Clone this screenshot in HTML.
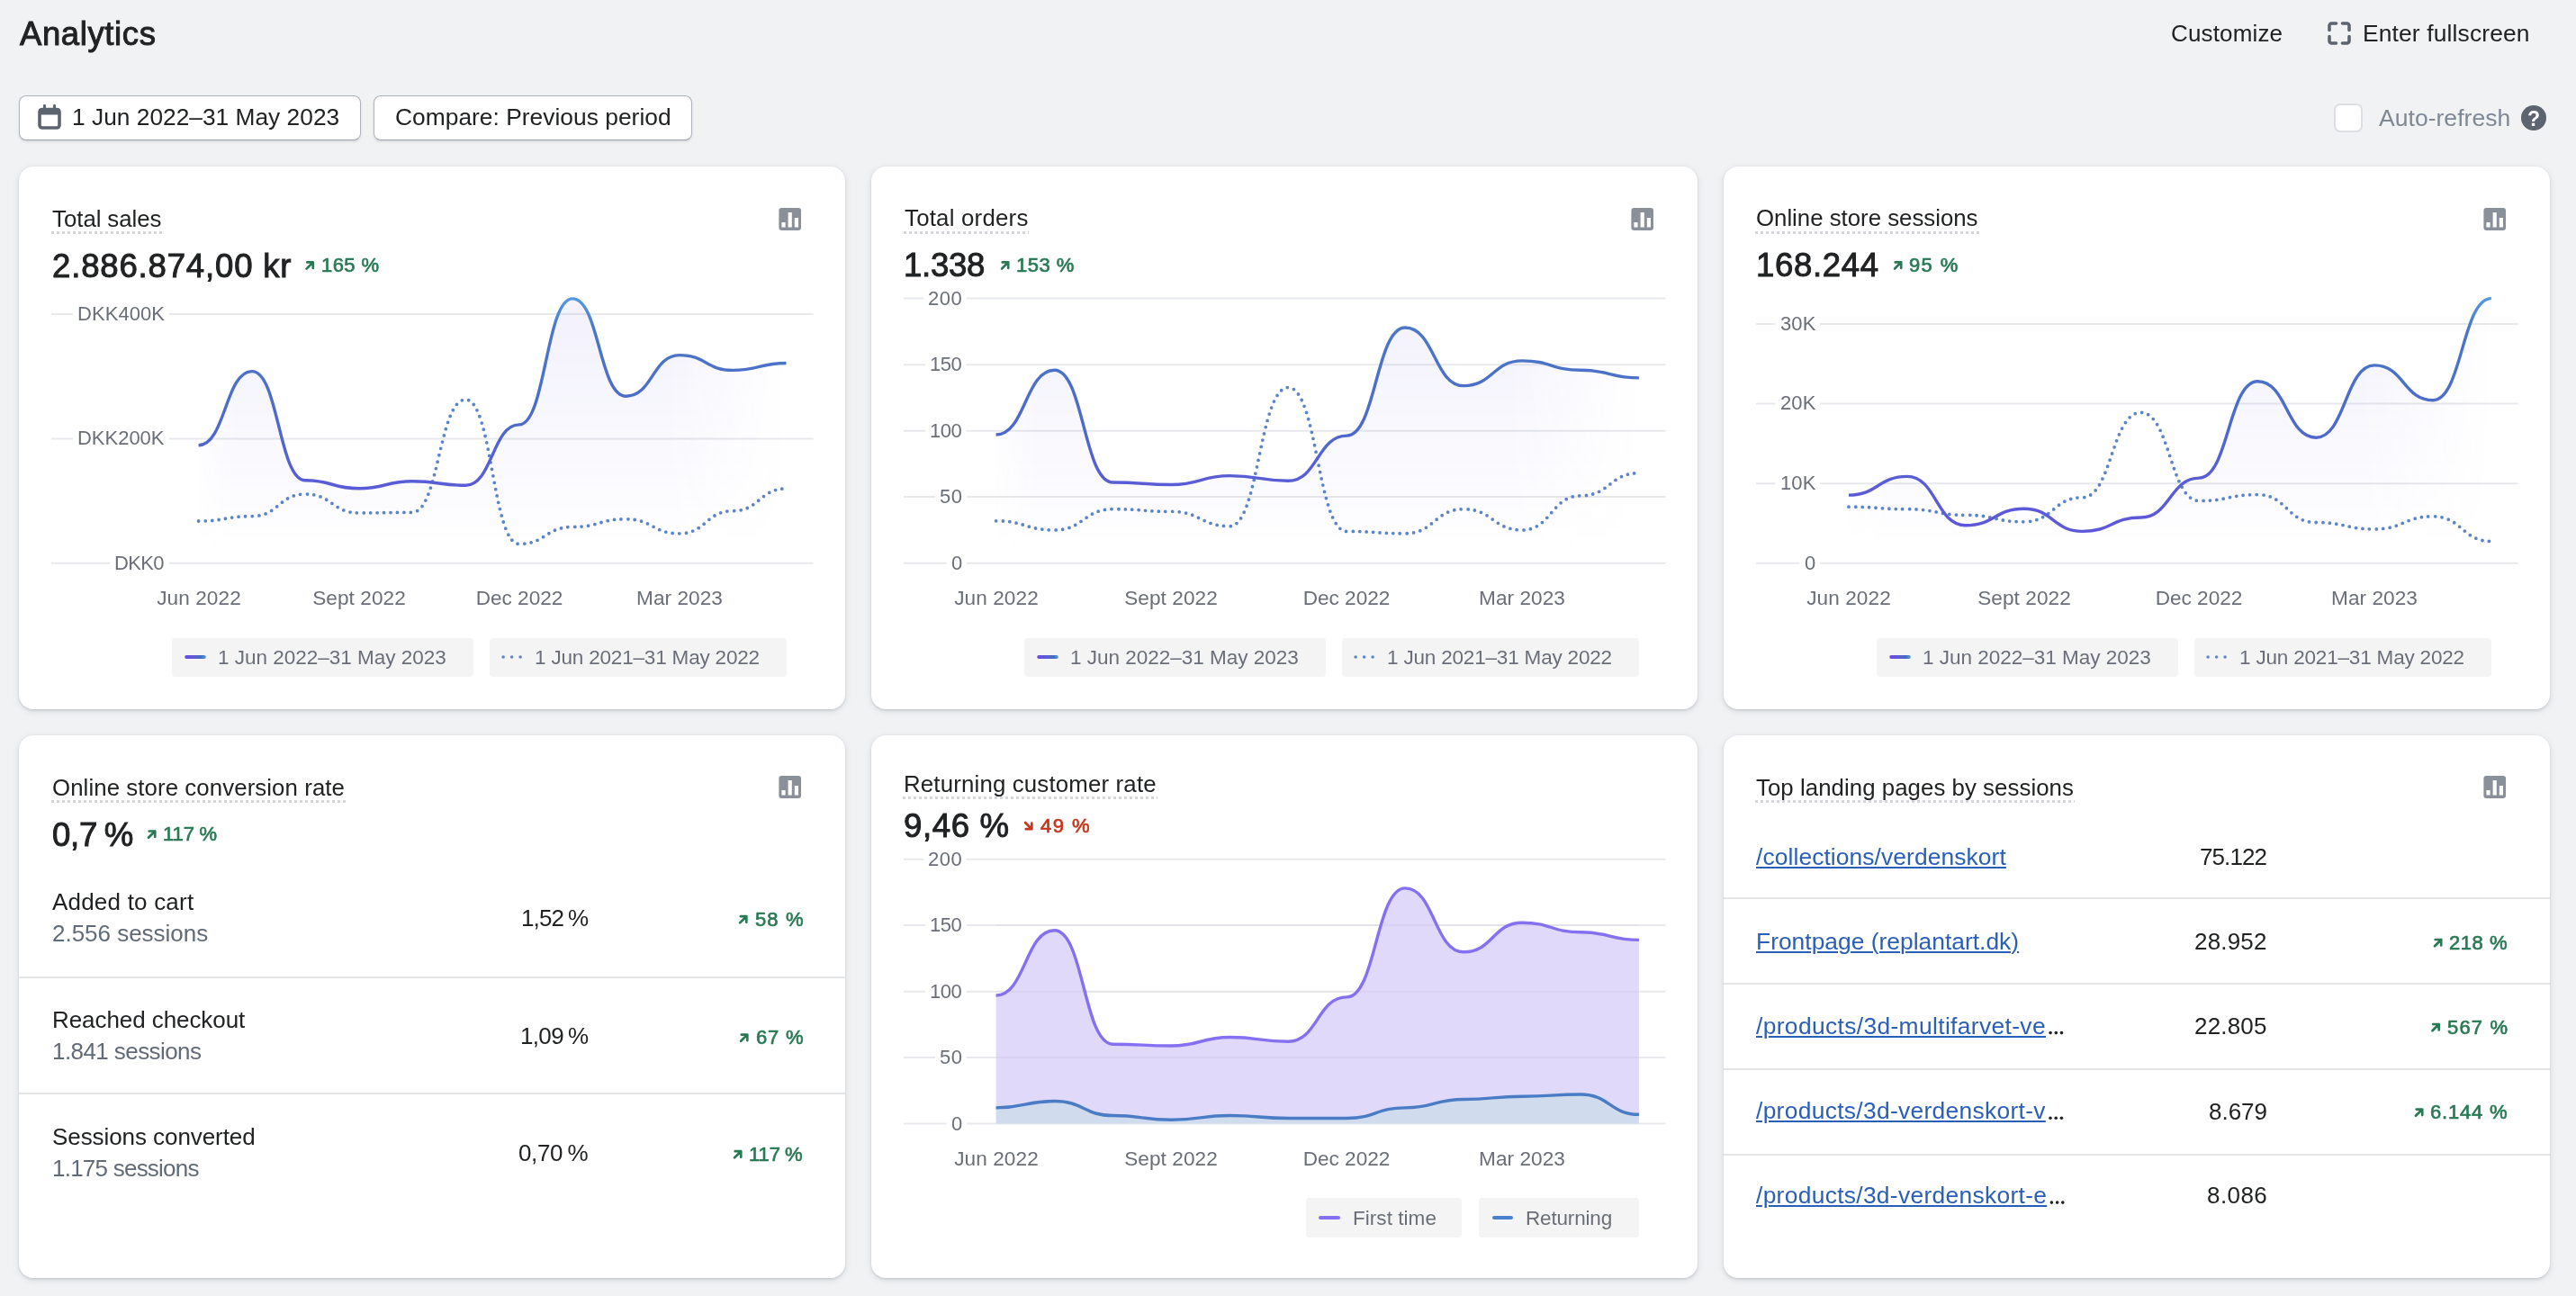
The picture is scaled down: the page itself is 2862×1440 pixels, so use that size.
<!DOCTYPE html>
<html><head><meta charset="utf-8">
<style>
html,body{margin:0;padding:0;}
body{width:2862px;height:1440px;background:#f1f2f4;position:relative;overflow:hidden;font-family:"Liberation Sans", sans-serif;}
.t{position:absolute;white-space:nowrap;line-height:1;z-index:3;will-change:transform;}
.b{position:absolute;z-index:1;}
svg.main{position:absolute;left:0;top:0;z-index:2;}
</style></head><body>
<div class="b" style="left:21px;top:106px;width:380.00px;height:50.00px;background:#fff;border:1.5px solid #aeb3bb;border-bottom-color:#9ca2ab;border-radius:8px;box-sizing:border-box;box-shadow:0 2px 3px rgba(30,30,40,0.10);"></div><div class="b" style="left:415px;top:106px;width:354.00px;height:50.00px;background:#fff;border:1.5px solid #aeb3bb;border-bottom-color:#9ca2ab;border-radius:8px;box-sizing:border-box;box-shadow:0 2px 3px rgba(30,30,40,0.10);"></div><div class="b" style="left:2593px;top:115px;width:32.00px;height:32.00px;background:#fff;border:2.6px solid #dddfe3;border-radius:7px;box-sizing:border-box;"></div><div class="b" style="left:21px;top:185px;width:918.00px;height:603.00px;background:#fff;border-radius:16px;box-shadow:0 0 0 0.5px rgba(60,60,70,0.04),0 2px 3px rgba(30,30,40,0.11),0 2px 10px rgba(30,30,40,0.09);"></div><div class="b" style="left:968px;top:185px;width:918.00px;height:603.00px;background:#fff;border-radius:16px;box-shadow:0 0 0 0.5px rgba(60,60,70,0.04),0 2px 3px rgba(30,30,40,0.11),0 2px 10px rgba(30,30,40,0.09);"></div><div class="b" style="left:1915px;top:185px;width:918.00px;height:603.00px;background:#fff;border-radius:16px;box-shadow:0 0 0 0.5px rgba(60,60,70,0.04),0 2px 3px rgba(30,30,40,0.11),0 2px 10px rgba(30,30,40,0.09);"></div><div class="b" style="left:21px;top:817px;width:918.00px;height:603.00px;background:#fff;border-radius:16px;box-shadow:0 0 0 0.5px rgba(60,60,70,0.04),0 2px 3px rgba(30,30,40,0.11),0 2px 10px rgba(30,30,40,0.09);"></div><div class="b" style="left:968px;top:817px;width:918.00px;height:603.00px;background:#fff;border-radius:16px;box-shadow:0 0 0 0.5px rgba(60,60,70,0.04),0 2px 3px rgba(30,30,40,0.11),0 2px 10px rgba(30,30,40,0.09);"></div><div class="b" style="left:1915px;top:817px;width:918.00px;height:603.00px;background:#fff;border-radius:16px;box-shadow:0 0 0 0.5px rgba(60,60,70,0.04),0 2px 3px rgba(30,30,40,0.11),0 2px 10px rgba(30,30,40,0.09);"></div><div class="b" style="left:56.8px;top:256.8px;width:123.50px;height:3.00px;background-image:linear-gradient(to right,#d4d6da 50%,transparent 50%);background-size:6px 3px;"></div><div class="b" style="left:191.2px;top:709.3px;width:334.50px;height:42.50px;background:#f4f4f5;border-radius:4px;"></div><div class="b" style="left:543.9px;top:709.3px;width:329.80px;height:42.50px;background:#f4f4f5;border-radius:4px;"></div><div class="b" style="left:1003.6px;top:256.8px;width:139.30px;height:3.00px;background-image:linear-gradient(to right,#d4d6da 50%,transparent 50%);background-size:6px 3px;"></div><div class="b" style="left:1138.2px;top:709.3px;width:334.50px;height:42.50px;background:#f4f4f5;border-radius:4px;"></div><div class="b" style="left:1490.9px;top:709.3px;width:329.80px;height:42.50px;background:#f4f4f5;border-radius:4px;"></div><div class="b" style="left:1950.4px;top:256.8px;width:248.50px;height:3.00px;background-image:linear-gradient(to right,#d4d6da 50%,transparent 50%);background-size:6px 3px;"></div><div class="b" style="left:2085.2px;top:709.3px;width:334.50px;height:42.50px;background:#f4f4f5;border-radius:4px;"></div><div class="b" style="left:2437.9px;top:709.3px;width:329.80px;height:42.50px;background:#f4f4f5;border-radius:4px;"></div><div class="b" style="left:56.5px;top:888.9px;width:327.00px;height:3.00px;background-image:linear-gradient(to right,#d4d6da 50%,transparent 50%);background-size:6px 3px;"></div><div class="b" style="left:21px;top:1084.5px;width:918.00px;height:2.00px;background:#e4e5e7;"></div><div class="b" style="left:21px;top:1214px;width:918.00px;height:2.00px;background:#e4e5e7;"></div><div class="b" style="left:1003.4px;top:884.5px;width:282.60px;height:3.00px;background-image:linear-gradient(to right,#d4d6da 50%,transparent 50%);background-size:6px 3px;"></div><div class="b" style="left:1451px;top:1331px;width:173.40px;height:43.60px;background:#f4f4f5;border-radius:4px;"></div><div class="b" style="left:1643px;top:1331px;width:178.00px;height:43.60px;background:#f4f4f5;border-radius:4px;"></div><div class="b" style="left:1950.4px;top:888.9px;width:354.90px;height:3.00px;background-image:linear-gradient(to right,#d4d6da 50%,transparent 50%);background-size:6px 3px;"></div><div class="b" style="left:1915px;top:996.9px;width:918.00px;height:2.00px;background:#e4e5e7;"></div><div class="b" style="left:1915px;top:1092.4px;width:918.00px;height:2.00px;background:#e4e5e7;"></div><div class="b" style="left:1915px;top:1187.2px;width:918.00px;height:2.00px;background:#e4e5e7;"></div><div class="b" style="left:1915px;top:1281.9px;width:918.00px;height:2.00px;background:#e4e5e7;"></div>
<svg class="main" width="2862" height="1440" viewBox="0 0 2862 1440"><defs>
<linearGradient id="lg" gradientUnits="userSpaceOnUse" x1="0" y1="325" x2="0" y2="600">
 <stop offset="0" stop-color="#58a0e6"/><stop offset="0.145" stop-color="#4a78c5"/><stop offset="0.527" stop-color="#4c6acb"/><stop offset="0.78" stop-color="#5a5cd6"/><stop offset="1" stop-color="#5e56da"/>
</linearGradient>
<linearGradient id="af" gradientUnits="userSpaceOnUse" x1="0" y1="330" x2="0" y2="615">
 <stop offset="0" stop-color="#6a5ee0" stop-opacity="0.085"/><stop offset="0.7" stop-color="#6a5ee0" stop-opacity="0.03"/><stop offset="1" stop-color="#6a5ee0" stop-opacity="0"/>
</linearGradient>
<linearGradient id="hm" x1="0" y1="0" x2="1" y2="0">
 <stop offset="0" stop-color="#fff" stop-opacity="0.2"/><stop offset="0.06" stop-color="#fff" stop-opacity="1"/><stop offset="0.8" stop-color="#fff" stop-opacity="1"/><stop offset="1" stop-color="#fff" stop-opacity="0"/>
</linearGradient>
<mask id="am" maskContentUnits="objectBoundingBox"><rect x="0" y="0" width="1" height="1" fill="url(#hm)"/></mask>
<linearGradient id="leg" x1="0" y1="0" x2="1" y2="0">
 <stop offset="0" stop-color="#6c48e8"/><stop offset="0.5" stop-color="#5a60d0"/><stop offset="0.78" stop-color="#3f6fc1"/><stop offset="1" stop-color="#5a9de2"/>
</linearGradient>
</defs>
<path d="M2588,33.5 V28.5 a2.5,2.5 0 0 1 2.5,-2.5 H2595.5 M2602.5,26 H2607.5 a2.5,2.5 0 0 1 2.5,2.5 V33.5 M2610,40.5 V45.5 a2.5,2.5 0 0 1 -2.5,2.5 H2602.5 M2595.5,48 H2590.5 a2.5,2.5 0 0 1 -2.5,-2.5 V40.5" fill="none" stroke="#5c6470" stroke-width="3.6" stroke-linecap="round" stroke-linejoin="round"/><rect x="44" y="121.5" width="22" height="20.5" rx="3" fill="none" stroke="#5c6470" stroke-width="3.6"/><rect x="43" y="120.5" width="24" height="7" rx="2" fill="#5c6470"/><rect x="48" y="116" width="3" height="6" rx="1.2" fill="#5c6470"/><rect x="59" y="116" width="3" height="6" rx="1.2" fill="#5c6470"/><circle cx="2815" cy="131" r="14" fill="#5c6470"/><rect x="865.4" y="231" width="24.6" height="25" rx="3" fill="#8a9099"/><rect x="868.4" y="247" width="4.2" height="5.5" fill="#fff"/><rect x="875.6" y="236" width="4.2" height="16.5" fill="#fff"/><rect x="882.8" y="242" width="4.2" height="10.5" fill="#fff"/><path d="M340.6,298.59999999999997 L347.8,291.4 M341.3,291.4 H347.8 V297.9" fill="none" stroke="#287a54" stroke-width="2.7" stroke-linecap="round" stroke-linejoin="round"/><line x1="57" y1="349" x2="903.5" y2="349" stroke="#e8e9ec" stroke-width="2"/><rect x="80.80000000000001" y="341" width="107" height="16" fill="#fff"/><line x1="57" y1="487.4" x2="903.5" y2="487.4" stroke="#e8e9ec" stroke-width="2"/><rect x="81.30000000000001" y="479.4" width="106.5" height="16" fill="#fff"/><line x1="57" y1="625.7" x2="903.5" y2="625.7" stroke="#e8e9ec" stroke-width="2"/><rect x="122.20000000000002" y="617.7" width="65.6" height="16" fill="#fff"/><path d="M220.60,494.80C250.27,494.80 250.27,412.60 279.95,412.60C309.62,412.60 309.62,533.80 339.30,533.80C368.98,533.80 368.98,542.70 398.65,542.70C428.32,542.70 428.32,534.80 458.00,534.80C487.68,534.80 487.68,539.30 517.35,539.30C547.03,539.30 547.03,471.90 576.70,471.90C606.38,471.90 606.38,331.90 636.05,331.90C665.72,331.90 665.72,440.20 695.40,440.20C725.08,440.20 725.08,394.60 754.75,394.60C784.42,394.60 784.42,411.40 814.10,411.40C843.78,411.40 843.78,403.50 873.45,403.50L873.45,625.7L220.60,625.7Z" fill="url(#af)" mask="url(#am)"/><path d="M220.60,579.00C250.27,579.00 250.27,573.60 279.95,573.60C309.62,573.60 309.62,549.00 339.30,549.00C368.98,549.00 368.98,569.90 398.65,569.90C428.32,569.90 428.32,569.40 458.00,569.40C487.68,569.40 487.68,444.00 517.35,444.00C547.03,444.00 547.03,604.40 576.70,604.40C606.38,604.40 606.38,585.50 636.05,585.50C665.72,585.50 665.72,576.80 695.40,576.80C725.08,576.80 725.08,592.80 754.75,592.80C784.42,592.80 784.42,567.70 814.10,567.70C843.78,567.70 843.78,543.00 873.45,543.00" fill="none" stroke="#5b84c8" stroke-width="3.8" stroke-linecap="round" stroke-dasharray="0 7.5"/><path d="M220.60,494.80C250.27,494.80 250.27,412.60 279.95,412.60C309.62,412.60 309.62,533.80 339.30,533.80C368.98,533.80 368.98,542.70 398.65,542.70C428.32,542.70 428.32,534.80 458.00,534.80C487.68,534.80 487.68,539.30 517.35,539.30C547.03,539.30 547.03,471.90 576.70,471.90C606.38,471.90 606.38,331.90 636.05,331.90C665.72,331.90 665.72,440.20 695.40,440.20C725.08,440.20 725.08,394.60 754.75,394.60C784.42,394.60 784.42,411.40 814.10,411.40C843.78,411.40 843.78,403.50 873.45,403.50" fill="none" stroke="url(#lg)" stroke-width="3.4"/><rect x="205.2" y="728" width="23.7" height="4" rx="2" fill="url(#leg)"/><circle cx="559.1" cy="730" r="1.8" fill="#5b87c9"/><circle cx="568.6" cy="730" r="1.8" fill="#5b87c9"/><circle cx="578.1" cy="730" r="1.8" fill="#5b87c9"/><rect x="1812.4" y="231" width="24.6" height="25" rx="3" fill="#8a9099"/><rect x="1815.4" y="247" width="4.2" height="5.5" fill="#fff"/><rect x="1822.6000000000001" y="236" width="4.2" height="16.5" fill="#fff"/><rect x="1829.8000000000002" y="242" width="4.2" height="10.5" fill="#fff"/><path d="M1113.0,298.59999999999997 L1120.2,291.4 M1113.7,291.4 H1120.2 V297.9" fill="none" stroke="#287a54" stroke-width="2.7" stroke-linecap="round" stroke-linejoin="round"/><line x1="1004" y1="331.6" x2="1850.5" y2="331.6" stroke="#e8e9ec" stroke-width="2"/><rect x="1026.2" y="323.6" width="47.8" height="16" fill="#fff"/><line x1="1004" y1="405.2" x2="1850.5" y2="405.2" stroke="#e8e9ec" stroke-width="2"/><rect x="1028.3" y="397.2" width="45.7" height="16" fill="#fff"/><line x1="1004" y1="478.8" x2="1850.5" y2="478.8" stroke="#e8e9ec" stroke-width="2"/><rect x="1028.3" y="470.8" width="45.7" height="16" fill="#fff"/><line x1="1004" y1="552" x2="1850.5" y2="552" stroke="#e8e9ec" stroke-width="2"/><rect x="1039" y="544" width="35" height="16" fill="#fff"/><line x1="1004" y1="625.7" x2="1850.5" y2="625.7" stroke="#e8e9ec" stroke-width="2"/><rect x="1051.5" y="617.7" width="22.5" height="16" fill="#fff"/><path d="M1106.60,483.06C1139.07,483.06 1139.07,411.30 1171.54,411.30C1204.01,411.30 1204.01,536.00 1236.48,536.00C1268.95,536.00 1268.95,538.50 1301.42,538.50C1333.89,538.50 1333.89,528.65 1366.36,528.65C1398.83,528.65 1398.83,534.23 1431.30,534.23C1463.77,534.23 1463.77,484.09 1496.24,484.09C1528.71,484.09 1528.71,363.95 1561.18,363.95C1593.65,363.95 1593.65,428.65 1626.12,428.65C1658.59,428.65 1658.59,400.86 1691.06,400.86C1723.53,400.86 1723.53,411.30 1756.00,411.30C1788.47,411.30 1788.47,419.83 1820.94,419.83L1820.94,625.7L1106.60,625.7Z" fill="url(#af)" mask="url(#am)"/><path d="M1106.60,578.79C1139.07,578.79 1139.07,588.94 1171.54,588.94C1204.01,588.94 1204.01,565.70 1236.48,565.70C1268.95,565.70 1268.95,568.35 1301.42,568.35C1333.89,568.35 1333.89,584.67 1366.36,584.67C1398.83,584.67 1398.83,430.56 1431.30,430.56C1463.77,430.56 1463.77,590.41 1496.24,590.41C1528.71,590.41 1528.71,592.76 1561.18,592.76C1593.65,592.76 1593.65,565.70 1626.12,565.70C1658.59,565.70 1658.59,588.94 1691.06,588.94C1723.53,588.94 1723.53,550.85 1756.00,550.85C1788.47,550.85 1788.47,525.71 1820.94,525.71" fill="none" stroke="#5b84c8" stroke-width="3.8" stroke-linecap="round" stroke-dasharray="0 7.5"/><path d="M1106.60,483.06C1139.07,483.06 1139.07,411.30 1171.54,411.30C1204.01,411.30 1204.01,536.00 1236.48,536.00C1268.95,536.00 1268.95,538.50 1301.42,538.50C1333.89,538.50 1333.89,528.65 1366.36,528.65C1398.83,528.65 1398.83,534.23 1431.30,534.23C1463.77,534.23 1463.77,484.09 1496.24,484.09C1528.71,484.09 1528.71,363.95 1561.18,363.95C1593.65,363.95 1593.65,428.65 1626.12,428.65C1658.59,428.65 1658.59,400.86 1691.06,400.86C1723.53,400.86 1723.53,411.30 1756.00,411.30C1788.47,411.30 1788.47,419.83 1820.94,419.83" fill="none" stroke="url(#lg)" stroke-width="3.4"/><rect x="1152.2" y="728" width="23.7" height="4" rx="2" fill="url(#leg)"/><circle cx="1506.1" cy="730" r="1.8" fill="#5b87c9"/><circle cx="1515.6" cy="730" r="1.8" fill="#5b87c9"/><circle cx="1525.1" cy="730" r="1.8" fill="#5b87c9"/><rect x="2759.4" y="231" width="24.6" height="25" rx="3" fill="#8a9099"/><rect x="2762.4" y="247" width="4.2" height="5.5" fill="#fff"/><rect x="2769.6" y="236" width="4.2" height="16.5" fill="#fff"/><rect x="2776.8" y="242" width="4.2" height="10.5" fill="#fff"/><path d="M2105.0,298.59999999999997 L2112.2,291.4 M2105.7,291.4 H2112.2 V297.9" fill="none" stroke="#287a54" stroke-width="2.7" stroke-linecap="round" stroke-linejoin="round"/><line x1="1951" y1="360" x2="2797.5" y2="360" stroke="#e8e9ec" stroke-width="2"/><rect x="1972.5" y="352" width="49.3" height="16" fill="#fff"/><line x1="1951" y1="448.4" x2="2797.5" y2="448.4" stroke="#e8e9ec" stroke-width="2"/><rect x="1972.5" y="440.4" width="49.3" height="16" fill="#fff"/><line x1="1951" y1="537.3" x2="2797.5" y2="537.3" stroke="#e8e9ec" stroke-width="2"/><rect x="1972.5" y="529.3" width="49.3" height="16" fill="#fff"/><line x1="1951" y1="625.7" x2="2797.5" y2="625.7" stroke="#e8e9ec" stroke-width="2"/><rect x="1999.3" y="617.7" width="22.5" height="16" fill="#fff"/><path d="M2054.00,550.10C2086.45,550.10 2086.45,529.40 2118.90,529.40C2151.35,529.40 2151.35,583.70 2183.80,583.70C2216.25,583.70 2216.25,565.20 2248.70,565.20C2281.15,565.20 2281.15,590.40 2313.60,590.40C2346.05,590.40 2346.05,575.00 2378.50,575.00C2410.95,575.00 2410.95,531.10 2443.40,531.10C2475.85,531.10 2475.85,423.70 2508.30,423.70C2540.75,423.70 2540.75,486.20 2573.20,486.20C2605.65,486.20 2605.65,405.90 2638.10,405.90C2670.55,405.90 2670.55,444.70 2703.00,444.70C2735.45,444.70 2735.45,331.60 2767.90,331.60L2767.90,625.7L2054.00,625.7Z" fill="url(#af)" mask="url(#am)"/><path d="M2054.00,563.20C2086.45,563.20 2086.45,565.70 2118.90,565.70C2151.35,565.70 2151.35,572.30 2183.80,572.30C2216.25,572.30 2216.25,579.80 2248.70,579.80C2281.15,579.80 2281.15,552.80 2313.60,552.80C2346.05,552.80 2346.05,458.30 2378.50,458.30C2410.95,458.30 2410.95,556.50 2443.40,556.50C2475.85,556.50 2475.85,549.60 2508.30,549.60C2540.75,549.60 2540.75,580.50 2573.20,580.50C2605.65,580.50 2605.65,587.90 2638.10,587.90C2670.55,587.90 2670.55,573.80 2703.00,573.80C2735.45,573.80 2735.45,601.50 2767.90,601.50" fill="none" stroke="#5b84c8" stroke-width="3.8" stroke-linecap="round" stroke-dasharray="0 7.5"/><path d="M2054.00,550.10C2086.45,550.10 2086.45,529.40 2118.90,529.40C2151.35,529.40 2151.35,583.70 2183.80,583.70C2216.25,583.70 2216.25,565.20 2248.70,565.20C2281.15,565.20 2281.15,590.40 2313.60,590.40C2346.05,590.40 2346.05,575.00 2378.50,575.00C2410.95,575.00 2410.95,531.10 2443.40,531.10C2475.85,531.10 2475.85,423.70 2508.30,423.70C2540.75,423.70 2540.75,486.20 2573.20,486.20C2605.65,486.20 2605.65,405.90 2638.10,405.90C2670.55,405.90 2670.55,444.70 2703.00,444.70C2735.45,444.70 2735.45,331.60 2767.90,331.60" fill="none" stroke="url(#lg)" stroke-width="3.4"/><rect x="2099.2" y="728" width="23.7" height="4" rx="2" fill="url(#leg)"/><circle cx="2453.1" cy="730" r="1.8" fill="#5b87c9"/><circle cx="2462.6" cy="730" r="1.8" fill="#5b87c9"/><circle cx="2472.1" cy="730" r="1.8" fill="#5b87c9"/><rect x="865.4" y="862" width="24.6" height="25" rx="3" fill="#8a9099"/><rect x="868.4" y="878" width="4.2" height="5.5" fill="#fff"/><rect x="875.6" y="867" width="4.2" height="16.5" fill="#fff"/><rect x="882.8" y="873" width="4.2" height="10.5" fill="#fff"/><path d="M165.00000000000003,930.7 L172.20000000000002,923.5 M165.70000000000002,923.5 H172.20000000000002 V930" fill="none" stroke="#287a54" stroke-width="2.7" stroke-linecap="round" stroke-linejoin="round"/><path d="M822.0999999999999,1025.4 L829.3,1018.2 M822.8,1018.2 H829.3 V1024.7" fill="none" stroke="#287a54" stroke-width="2.7" stroke-linecap="round" stroke-linejoin="round"/><path d="M823.0999999999999,1156.8000000000002 L830.3,1149.6000000000001 M823.8,1149.6000000000001 H830.3 V1156.1000000000001" fill="none" stroke="#287a54" stroke-width="2.7" stroke-linecap="round" stroke-linejoin="round"/><path d="M815.9999999999999,1286.4 L823.1999999999999,1279.2 M816.6999999999999,1279.2 H823.1999999999999 V1285.7" fill="none" stroke="#287a54" stroke-width="2.7" stroke-linecap="round" stroke-linejoin="round"/><path d="M1139.1,914.0 L1146.3,921.2 M1146.3,914.7 V921.2 H1139.8" fill="none" stroke="#c7351a" stroke-width="2.7" stroke-linecap="round" stroke-linejoin="round"/><line x1="1004" y1="954.8" x2="1850.5" y2="954.8" stroke="#e8e9ec" stroke-width="2"/><rect x="1026.2" y="946.8" width="47.8" height="16" fill="#fff"/><line x1="1004" y1="1028" x2="1850.5" y2="1028" stroke="#e8e9ec" stroke-width="2"/><rect x="1028.3" y="1020" width="45.7" height="16" fill="#fff"/><line x1="1004" y1="1101.7" x2="1850.5" y2="1101.7" stroke="#e8e9ec" stroke-width="2"/><rect x="1028.3" y="1093.7" width="45.7" height="16" fill="#fff"/><line x1="1004" y1="1175" x2="1850.5" y2="1175" stroke="#e8e9ec" stroke-width="2"/><rect x="1039" y="1167" width="35" height="16" fill="#fff"/><line x1="1004" y1="1248.6" x2="1850.5" y2="1248.6" stroke="#e8e9ec" stroke-width="2"/><rect x="1051.5" y="1240.6" width="22.5" height="16" fill="#fff"/><path d="M1106.60,1106.00C1139.07,1106.00 1139.07,1033.80 1171.54,1033.80C1204.01,1033.80 1204.01,1160.20 1236.48,1160.20C1268.95,1160.20 1268.95,1162.00 1301.42,1162.00C1333.89,1162.00 1333.89,1152.50 1366.36,1152.50C1398.83,1152.50 1398.83,1157.30 1431.30,1157.30C1463.77,1157.30 1463.77,1107.90 1496.24,1107.90C1528.71,1107.90 1528.71,986.90 1561.18,986.90C1593.65,986.90 1593.65,1057.80 1626.12,1057.80C1658.59,1057.80 1658.59,1025.20 1691.06,1025.20C1723.53,1025.20 1723.53,1035.80 1756.00,1035.80C1788.47,1035.80 1788.47,1044.40 1820.94,1044.40L1820.94,1238.30C1788.47,1238.30 1788.47,1216.00 1756.00,1216.00C1723.53,1216.00 1723.53,1218.30 1691.06,1218.30C1658.59,1218.30 1658.59,1221.50 1626.12,1221.50C1593.65,1221.50 1593.65,1230.90 1561.18,1230.90C1528.71,1230.90 1528.71,1242.50 1496.24,1242.50C1463.77,1242.50 1463.77,1242.50 1431.30,1242.50C1398.83,1242.50 1398.83,1239.50 1366.36,1239.50C1333.89,1239.50 1333.89,1244.20 1301.42,1244.20C1268.95,1244.20 1268.95,1239.50 1236.48,1239.50C1204.01,1239.50 1204.01,1223.50 1171.54,1223.50C1139.07,1223.50 1139.07,1230.90 1106.60,1230.90Z" fill="#ddd6fa" fill-opacity="0.92"/><path d="M1106.60,1230.90C1139.07,1230.90 1139.07,1223.50 1171.54,1223.50C1204.01,1223.50 1204.01,1239.50 1236.48,1239.50C1268.95,1239.50 1268.95,1244.20 1301.42,1244.20C1333.89,1244.20 1333.89,1239.50 1366.36,1239.50C1398.83,1239.50 1398.83,1242.50 1431.30,1242.50C1463.77,1242.50 1463.77,1242.50 1496.24,1242.50C1528.71,1242.50 1528.71,1230.90 1561.18,1230.90C1593.65,1230.90 1593.65,1221.50 1626.12,1221.50C1658.59,1221.50 1658.59,1218.30 1691.06,1218.30C1723.53,1218.30 1723.53,1216.00 1756.00,1216.00C1788.47,1216.00 1788.47,1238.30 1820.94,1238.30L1820.94,1248.6L1106.60,1248.6Z" fill="#d0dcee"/><line x1="1106.6" y1="1028" x2="1820.9399999999998" y2="1028" stroke="#000" stroke-opacity="0.025" stroke-width="2"/><line x1="1106.6" y1="1101.7" x2="1820.9399999999998" y2="1101.7" stroke="#000" stroke-opacity="0.025" stroke-width="2"/><line x1="1106.6" y1="1175" x2="1820.9399999999998" y2="1175" stroke="#000" stroke-opacity="0.025" stroke-width="2"/><path d="M1106.60,1230.90C1139.07,1230.90 1139.07,1223.50 1171.54,1223.50C1204.01,1223.50 1204.01,1239.50 1236.48,1239.50C1268.95,1239.50 1268.95,1244.20 1301.42,1244.20C1333.89,1244.20 1333.89,1239.50 1366.36,1239.50C1398.83,1239.50 1398.83,1242.50 1431.30,1242.50C1463.77,1242.50 1463.77,1242.50 1496.24,1242.50C1528.71,1242.50 1528.71,1230.90 1561.18,1230.90C1593.65,1230.90 1593.65,1221.50 1626.12,1221.50C1658.59,1221.50 1658.59,1218.30 1691.06,1218.30C1723.53,1218.30 1723.53,1216.00 1756.00,1216.00C1788.47,1216.00 1788.47,1238.30 1820.94,1238.30" fill="none" stroke="#4a7cc6" stroke-width="3.4"/><path d="M1106.60,1106.00C1139.07,1106.00 1139.07,1033.80 1171.54,1033.80C1204.01,1033.80 1204.01,1160.20 1236.48,1160.20C1268.95,1160.20 1268.95,1162.00 1301.42,1162.00C1333.89,1162.00 1333.89,1152.50 1366.36,1152.50C1398.83,1152.50 1398.83,1157.30 1431.30,1157.30C1463.77,1157.30 1463.77,1107.90 1496.24,1107.90C1528.71,1107.90 1528.71,986.90 1561.18,986.90C1593.65,986.90 1593.65,1057.80 1626.12,1057.80C1658.59,1057.80 1658.59,1025.20 1691.06,1025.20C1723.53,1025.20 1723.53,1035.80 1756.00,1035.80C1788.47,1035.80 1788.47,1044.40 1820.94,1044.40" fill="none" stroke="#8470f0" stroke-width="3.4"/><rect x="1465" y="1351" width="24" height="4" rx="2" fill="#8470f0"/><rect x="1658" y="1351" width="23" height="4" rx="2" fill="#4a80cf"/><rect x="2759.4" y="862" width="24.6" height="25" rx="3" fill="#8a9099"/><rect x="2762.4" y="878" width="4.2" height="5.5" fill="#fff"/><rect x="2769.6" y="867" width="4.2" height="16.5" fill="#fff"/><rect x="2776.8" y="873" width="4.2" height="10.5" fill="#fff"/><path d="M2705.0000000000005,1051.2 L2712.2000000000003,1044.0 M2705.7000000000003,1044.0 H2712.2000000000003 V1050.5" fill="none" stroke="#287a54" stroke-width="2.7" stroke-linecap="round" stroke-linejoin="round"/><circle cx="2278.10" cy="1147.60" r="1.8" fill="#202223"/><circle cx="2284.30" cy="1147.60" r="1.8" fill="#202223"/><circle cx="2290.50" cy="1147.60" r="1.8" fill="#202223"/><path d="M2702.5000000000005,1145.2 L2709.7000000000003,1138.0 M2703.2000000000003,1138.0 H2709.7000000000003 V1144.5" fill="none" stroke="#287a54" stroke-width="2.7" stroke-linecap="round" stroke-linejoin="round"/><circle cx="2278.00" cy="1242.20" r="1.8" fill="#202223"/><circle cx="2284.20" cy="1242.20" r="1.8" fill="#202223"/><circle cx="2290.40" cy="1242.20" r="1.8" fill="#202223"/><path d="M2684.0000000000005,1239.8 L2691.2000000000003,1232.6 M2684.7000000000003,1232.6 H2691.2000000000003 V1239.1" fill="none" stroke="#287a54" stroke-width="2.7" stroke-linecap="round" stroke-linejoin="round"/><circle cx="2279.40" cy="1336.10" r="1.8" fill="#202223"/><circle cx="2285.60" cy="1336.10" r="1.8" fill="#202223"/><circle cx="2291.80" cy="1336.10" r="1.8" fill="#202223"/>
</svg>
<div class="t" style="top:20.30px;font-size:36.5px;color:#202223;-webkit-text-stroke:0.95px #202223;letter-spacing:0.606px;left:22.00px;">Analytics</div><div class="t" style="top:24.39px;font-size:26px;color:#202223;letter-spacing:0.148px;left:2412.00px;">Customize</div><div class="t" style="top:24.05px;font-size:26.4px;color:#202223;letter-spacing:0.145px;left:2625.00px;">Enter fullscreen</div><div class="t" style="top:117.14px;font-size:26.3px;color:#202223;letter-spacing:0.017px;left:80.10px;">1 Jun 2022–31 May 2023</div><div class="t" style="top:117.05px;font-size:26.4px;color:#202223;letter-spacing:0.001px;left:438.70px;">Compare: Previous period</div><div class="t" style="top:117.57px;font-size:26.5px;color:#7f8895;letter-spacing:0.035px;left:2642.60px;">Auto-refresh</div><div class="t" style="top:121.03px;font-size:23px;color:#fff;font-weight:700;left:2415.00px;width:800px;text-align:center;">?</div><div class="t" style="top:230.66px;font-size:25.8px;color:#202223;word-spacing:-0.395px;letter-spacing:0.000px;left:57.80px;">Total sales</div><div class="t" style="top:277.92px;font-size:36.6px;color:#202223;-webkit-text-stroke:0.95px #202223;letter-spacing:0.810px;left:58.00px;">2.886.874,00 kr</div><div class="t" style="top:284.28px;font-size:22px;color:#287a54;-webkit-text-stroke:0.66px #287a54;letter-spacing:0.405px;right:2440.59px;">165 %</div><div class="t" style="top:337.98px;font-size:22px;color:#6a6e78;letter-spacing:0.064px;right:2679.14px;">DKK400K</div><div class="t" style="top:476.38px;font-size:22px;color:#6a6e78;letter-spacing:-0.019px;right:2679.22px;">DKK200K</div><div class="t" style="top:614.68px;font-size:22px;color:#6a6e78;letter-spacing:-0.624px;right:2679.82px;">DKK0</div><div class="t" style="top:653.97px;font-size:22.6px;color:#6a6e78;letter-spacing:0.087px;left:-179.36px;width:800px;text-align:center;">Jun 2022</div><div class="t" style="top:653.97px;font-size:22.6px;color:#6a6e78;letter-spacing:0.069px;left:-1.32px;width:800px;text-align:center;">Sept 2022</div><div class="t" style="top:653.97px;font-size:22.6px;color:#6a6e78;word-spacing:-0.046px;letter-spacing:0.000px;left:176.70px;width:800px;text-align:center;">Dec 2022</div><div class="t" style="top:653.97px;font-size:22.6px;color:#6a6e78;letter-spacing:0.060px;left:354.78px;width:800px;text-align:center;">Mar 2023</div><div class="t" style="top:719.75px;font-size:22.5px;color:#6a6e78;letter-spacing:-0.007px;left:242.00px;">1 Jun 2022–31 May 2023</div><div class="t" style="top:719.75px;font-size:22.5px;color:#6a6e78;letter-spacing:-0.183px;left:594.20px;">1 Jun 2021–31 May 2022</div><div class="t" style="top:230.36px;font-size:25.8px;color:#202223;letter-spacing:0.228px;left:1004.60px;">Total orders</div><div class="t" style="top:276.72px;font-size:36.6px;color:#202223;-webkit-text-stroke:0.95px #202223;letter-spacing:-0.297px;left:1004.40px;">1.338</div><div class="t" style="top:284.28px;font-size:22px;color:#287a54;-webkit-text-stroke:0.66px #287a54;letter-spacing:0.480px;right:1667.82px;">153 %</div><div class="t" style="top:320.58px;font-size:22px;color:#6a6e78;letter-spacing:0.547px;right:1792.45px;">200</div><div class="t" style="top:394.18px;font-size:22px;color:#6a6e78;letter-spacing:-0.503px;right:1793.50px;">150</div><div class="t" style="top:467.78px;font-size:22px;color:#6a6e78;letter-spacing:-0.503px;right:1793.50px;">100</div><div class="t" style="top:540.98px;font-size:22px;color:#6a6e78;letter-spacing:0.529px;right:1792.47px;">50</div><div class="t" style="top:614.68px;font-size:22px;color:#6a6e78;letter-spacing:0.265px;right:1792.74px;">0</div><div class="t" style="top:653.97px;font-size:22.6px;color:#6a6e78;letter-spacing:0.087px;left:706.64px;width:800px;text-align:center;">Jun 2022</div><div class="t" style="top:653.97px;font-size:22.6px;color:#6a6e78;letter-spacing:0.069px;left:901.45px;width:800px;text-align:center;">Sept 2022</div><div class="t" style="top:653.97px;font-size:22.6px;color:#6a6e78;word-spacing:-0.046px;letter-spacing:0.000px;left:1096.24px;width:800px;text-align:center;">Dec 2022</div><div class="t" style="top:653.97px;font-size:22.6px;color:#6a6e78;letter-spacing:0.060px;left:1291.09px;width:800px;text-align:center;">Mar 2023</div><div class="t" style="top:719.75px;font-size:22.5px;color:#6a6e78;letter-spacing:-0.007px;left:1189.00px;">1 Jun 2022–31 May 2023</div><div class="t" style="top:719.75px;font-size:22.5px;color:#6a6e78;letter-spacing:-0.183px;left:1541.20px;">1 Jun 2021–31 May 2022</div><div class="t" style="top:230.36px;font-size:25.8px;color:#202223;letter-spacing:-0.008px;left:1951.40px;">Online store sessions</div><div class="t" style="top:276.72px;font-size:36.6px;color:#202223;-webkit-text-stroke:0.95px #202223;letter-spacing:0.633px;left:1951.40px;">168.244</div><div class="t" style="top:284.28px;font-size:22px;color:#287a54;-webkit-text-stroke:0.66px #287a54;letter-spacing:1.385px;right:684.91px;">95 %</div><div class="t" style="top:348.98px;font-size:22px;color:#6a6e78;letter-spacing:0.078px;right:845.12px;">30K</div><div class="t" style="top:437.38px;font-size:22px;color:#6a6e78;letter-spacing:0.078px;right:845.12px;">20K</div><div class="t" style="top:526.28px;font-size:22px;color:#6a6e78;letter-spacing:0.078px;right:845.12px;">10K</div><div class="t" style="top:614.68px;font-size:22px;color:#6a6e78;letter-spacing:0.265px;right:844.94px;">0</div><div class="t" style="top:653.97px;font-size:22.6px;color:#6a6e78;letter-spacing:0.087px;left:1654.04px;width:800px;text-align:center;">Jun 2022</div><div class="t" style="top:653.97px;font-size:22.6px;color:#6a6e78;letter-spacing:0.069px;left:1848.73px;width:800px;text-align:center;">Sept 2022</div><div class="t" style="top:653.97px;font-size:22.6px;color:#6a6e78;word-spacing:-0.046px;letter-spacing:0.000px;left:2043.40px;width:800px;text-align:center;">Dec 2022</div><div class="t" style="top:653.97px;font-size:22.6px;color:#6a6e78;letter-spacing:0.060px;left:2238.13px;width:800px;text-align:center;">Mar 2023</div><div class="t" style="top:719.75px;font-size:22.5px;color:#6a6e78;letter-spacing:-0.007px;left:2136.00px;">1 Jun 2022–31 May 2023</div><div class="t" style="top:719.75px;font-size:22.5px;color:#6a6e78;letter-spacing:-0.183px;left:2488.20px;">1 Jun 2021–31 May 2022</div><div class="t" style="top:863.26px;font-size:25.8px;color:#202223;letter-spacing:0.086px;left:57.50px;">Online store conversion rate</div><div class="t" style="top:909.72px;font-size:36.6px;color:#202223;-webkit-text-stroke:0.95px #202223;word-spacing:-2.237px;letter-spacing:-0.238px;left:57.50px;">0,7 %</div><div class="t" style="top:916.38px;font-size:22px;color:#287a54;-webkit-text-stroke:0.66px #287a54;word-spacing:-0.747px;letter-spacing:0.000px;right:2620.60px;">117 %</div><div class="t" style="top:988.99px;font-size:26px;color:#202223;letter-spacing:0.204px;left:57.50px;">Added to cart</div><div class="t" style="top:1023.99px;font-size:26px;color:#616b78;letter-spacing:-0.019px;left:57.50px;">2.556 sessions</div><div class="t" style="top:1006.99px;font-size:26px;color:#202223;word-spacing:-1.589px;letter-spacing:-0.871px;right:2208.87px;">1,52 %</div><div class="t" style="top:1011.08px;font-size:22px;color:#287a54;-webkit-text-stroke:0.66px #287a54;letter-spacing:1.118px;right:1968.88px;">58 %</div><div class="t" style="top:1120.49px;font-size:26px;color:#202223;letter-spacing:-0.071px;left:57.50px;">Reached checkout</div><div class="t" style="top:1155.49px;font-size:26px;color:#616b78;letter-spacing:-0.573px;left:57.50px;">1.841 sessions</div><div class="t" style="top:1138.39px;font-size:26px;color:#202223;word-spacing:-1.589px;letter-spacing:-0.671px;right:2208.67px;">1,09 %</div><div class="t" style="top:1142.48px;font-size:22px;color:#287a54;-webkit-text-stroke:0.66px #287a54;letter-spacing:0.785px;right:1969.21px;">67 %</div><div class="t" style="top:1249.99px;font-size:26px;color:#202223;letter-spacing:-0.071px;left:57.50px;">Sessions converted</div><div class="t" style="top:1285.49px;font-size:26px;color:#616b78;letter-spacing:-0.765px;left:57.50px;">1.175 sessions</div><div class="t" style="top:1267.99px;font-size:26px;color:#202223;word-spacing:-1.589px;letter-spacing:-0.351px;right:2208.35px;">0,70 %</div><div class="t" style="top:1272.08px;font-size:22px;color:#287a54;-webkit-text-stroke:0.66px #287a54;word-spacing:-1.147px;letter-spacing:0.000px;right:1970.00px;">117 %</div><div class="t" style="top:858.96px;font-size:25.8px;color:#202223;letter-spacing:0.175px;left:1004.40px;">Returning customer rate</div><div class="t" style="top:899.72px;font-size:36.6px;color:#202223;-webkit-text-stroke:0.95px #202223;letter-spacing:0.651px;left:1004.40px;">9,46 %</div><div class="t" style="top:907.08px;font-size:22px;color:#c7351a;-webkit-text-stroke:0.66px #c7351a;letter-spacing:1.452px;right:1650.55px;">49 %</div><div class="t" style="top:943.78px;font-size:22px;color:#6a6e78;letter-spacing:0.547px;right:1792.45px;">200</div><div class="t" style="top:1016.98px;font-size:22px;color:#6a6e78;letter-spacing:-0.503px;right:1793.50px;">150</div><div class="t" style="top:1090.68px;font-size:22px;color:#6a6e78;letter-spacing:-0.503px;right:1793.50px;">100</div><div class="t" style="top:1163.98px;font-size:22px;color:#6a6e78;letter-spacing:0.529px;right:1792.47px;">50</div><div class="t" style="top:1237.58px;font-size:22px;color:#6a6e78;letter-spacing:0.265px;right:1792.74px;">0</div><div class="t" style="top:1277.27px;font-size:22.6px;color:#6a6e78;letter-spacing:0.087px;left:706.64px;width:800px;text-align:center;">Jun 2022</div><div class="t" style="top:1277.27px;font-size:22.6px;color:#6a6e78;letter-spacing:0.069px;left:901.45px;width:800px;text-align:center;">Sept 2022</div><div class="t" style="top:1277.27px;font-size:22.6px;color:#6a6e78;word-spacing:-0.046px;letter-spacing:0.000px;left:1096.24px;width:800px;text-align:center;">Dec 2022</div><div class="t" style="top:1277.27px;font-size:22.6px;color:#6a6e78;letter-spacing:0.060px;left:1291.09px;width:800px;text-align:center;">Mar 2023</div><div class="t" style="top:1343.15px;font-size:22.5px;color:#6a6e78;letter-spacing:0.045px;left:1502.60px;">First time</div><div class="t" style="top:1343.15px;font-size:22.5px;color:#6a6e78;letter-spacing:-0.170px;left:1694.80px;">Returning</div><div class="t" style="top:863.26px;font-size:25.8px;color:#202223;letter-spacing:0.054px;left:1951.40px;">Top landing pages by sessions</div><div class="t" style="top:938.65px;font-size:26.4px;color:#2a5fb9;letter-spacing:0.089px;left:1951.40px;text-decoration:underline;text-decoration-thickness:2px;text-underline-offset:2px;">/collections/verdenskort</div><div class="t" style="top:938.99px;font-size:26px;color:#202223;letter-spacing:-0.905px;right:344.30px;">75.122</div><div class="t" style="top:1032.65px;font-size:26.4px;color:#2a5fb9;letter-spacing:0.008px;left:1951.40px;text-decoration:underline;text-decoration-thickness:2px;text-underline-offset:2px;">Frontpage (replantart.dk)</div><div class="t" style="top:1032.99px;font-size:26px;color:#202223;letter-spacing:0.175px;right:343.22px;">28.952</div><div class="t" style="top:1036.88px;font-size:22px;color:#287a54;-webkit-text-stroke:0.66px #287a54;letter-spacing:0.555px;right:75.44px;">218 %</div><div class="t" style="top:1126.65px;font-size:26.4px;color:#2a5fb9;letter-spacing:0.353px;left:1951.40px;text-decoration:underline;text-decoration-thickness:2px;text-underline-offset:2px;">/products/3d-multifarvet-ve</div><div class="t" style="top:1126.99px;font-size:26px;color:#202223;letter-spacing:0.175px;right:343.22px;">22.805</div><div class="t" style="top:1130.88px;font-size:22px;color:#287a54;-webkit-text-stroke:0.66px #287a54;letter-spacing:1.180px;right:74.82px;">567 %</div><div class="t" style="top:1221.25px;font-size:26.4px;color:#2a5fb9;letter-spacing:0.304px;left:1951.40px;text-decoration:underline;text-decoration-thickness:2px;text-underline-offset:2px;">/products/3d-verdenskort-v</div><div class="t" style="top:1221.59px;font-size:26px;color:#202223;letter-spacing:-0.016px;right:343.42px;">8.679</div><div class="t" style="top:1225.48px;font-size:22px;color:#287a54;-webkit-text-stroke:0.66px #287a54;letter-spacing:0.812px;right:75.19px;">6.144 %</div><div class="t" style="top:1315.15px;font-size:26.4px;color:#2a5fb9;letter-spacing:0.301px;left:1951.40px;text-decoration:underline;text-decoration-thickness:2px;text-underline-offset:2px;">/products/3d-verdenskort-e</div><div class="t" style="top:1315.49px;font-size:26px;color:#202223;letter-spacing:0.434px;right:342.97px;">8.086</div>
</body></html>
